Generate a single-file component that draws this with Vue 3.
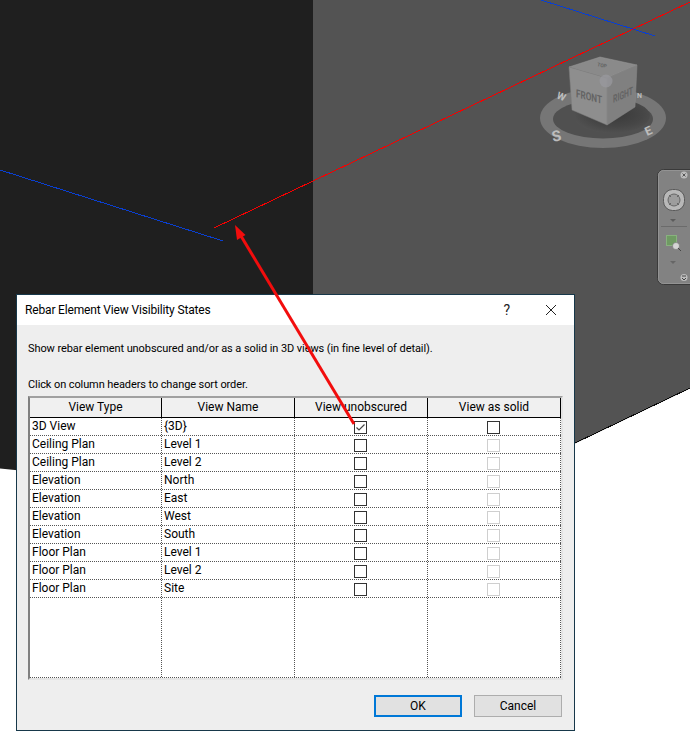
<script setup>
const rows = [
  { type: '3D View', name: '{3D}', checked: true, solid: true },
  { type: 'Ceiling Plan', name: 'Level 1' },
  { type: 'Ceiling Plan', name: 'Level 2' },
  { type: 'Elevation', name: 'North' },
  { type: 'Elevation', name: 'East' },
  { type: 'Elevation', name: 'West' },
  { type: 'Elevation', name: 'South' },
  { type: 'Floor Plan', name: 'Level 1' },
  { type: 'Floor Plan', name: 'Level 2' },
  { type: 'Floor Plan', name: 'Site' }
]
const headers = ['View Type', 'View Name', 'View unobscured', 'View as solid']
</script>

<template>
  <div class="desktop">
    <!-- the 3D model view behind the dialog -->
    <svg class="scene" width="690" height="736" viewBox="0 0 690 736">
      <defs>
        <radialGradient id="shadow" cx="0.55" cy="0.45" r="0.6">
          <stop offset="0" stop-color="#3a3a3a" />
          <stop offset="0.6" stop-color="#464646" />
          <stop offset="1" stop-color="#535353" />
        </radialGradient>
      </defs>
      <polygon points="-5,-5 313,-5 313,500 -5,468" fill="#1f1f1f" />
      <polygon points="313,-5 695,-5 695,386 400,527 313,527" fill="#535353" />
      <line x1="575" y1="443" x2="690" y2="388" stroke="#0c0c0c" stroke-width="1" shape-rendering="crispEdges" />
      <polygon points="0,470 16,478 16,520 0,520" fill="#fff" />
      <line x1="0" y1="170" x2="223" y2="241" stroke="#0a3fd0" stroke-width="1" shape-rendering="crispEdges" />
      <line x1="541" y1="0" x2="655" y2="36" stroke="#0a3fd0" stroke-width="1" shape-rendering="crispEdges" />
      <line x1="214" y1="228" x2="690" y2="2" stroke="#f60000" stroke-width="1" shape-rendering="crispEdges" />

      <!-- view cube -->
      <ellipse cx="603" cy="118" rx="63" ry="30" fill="#767676" />
      <ellipse cx="603" cy="119" rx="50" ry="19.500" fill="#505050" />
      <ellipse cx="612" cy="116" rx="38" ry="17" fill="url(#shadow)" />
      <text x="556" y="98" class="ring" transform="rotate(22 556 98)">W</text>
      <text x="637" y="98" class="ring small">N</text>
      <text x="553" y="142" class="ring big" transform="rotate(-12 553 142)">S</text>
      <text x="647" y="136" class="ring mid" transform="rotate(-24 647 136)">E</text>
      <polygon points="600,57 637,65 607,78 569,67" fill="#8a8a8a" stroke="#9a9a9a" stroke-width="0.5" />
      <polygon points="569,67 607,78 607,125 572,110" fill="#8e8e8e" stroke="#7c7c7c" stroke-width="0.5" />
      <polygon points="607,78 637,65 635,107 607,125" fill="#808080" stroke="#8a8a8a" stroke-width="0.5" />
      <circle cx="606" cy="81" r="6.500" fill="#98989e" opacity="0.75" />
      <text class="face" textLength="26" lengthAdjust="spacingAndGlyphs" transform="matrix(1 0.26 0 1 576 97)">FRONT</text>
      <text class="face" textLength="20" lengthAdjust="spacingAndGlyphs" transform="matrix(1 -0.44 0 1 613 103)">RIGHT</text>
      <text class="face tiny" x="597" y="66" transform="rotate(12 597 66)">TOP</text>

      <!-- navigation bar -->
      <rect x="657.500" y="169.500" width="40" height="115" rx="6" fill="#828282" stroke="#3a3a3a" />
      <rect x="658.500" y="170.500" width="38" height="113" rx="5" fill="none" stroke="#939393" />
      <circle cx="684" cy="175" r="3.500" fill="#bdbdbd" />
      <path d="M682.500 173.500l3 3M685.500 173.500l-3 3" stroke="#555" stroke-width="1" />
      <rect x="663.500" y="189.500" width="21" height="21" rx="9" fill="#b8b8b8" stroke="#5a5a5a" />
      <circle cx="674" cy="200" r="6" fill="#9d9d9d" stroke="#666" />
      <path d="M669 195l2 2M679 195l-2 2M669 205l2-2M679 205l-2-2" stroke="#666" />
      <path d="M670 219h6l-3 3z" fill="#5c5c5c" />
      <line x1="661" y1="226.500" x2="687" y2="226.500" stroke="#6b6b6b" />
      <rect x="666.500" y="235.500" width="10" height="10" fill="#6f9a63" stroke="#88b27e" />
      <circle cx="676" cy="246" r="3.500" fill="#d4d4d4" stroke="#666" stroke-width="0.500" />
      <line x1="678" y1="248" x2="681" y2="251" stroke="#444" />
      <path d="M670 261h6l-3 3z" fill="#666" />
      <circle cx="684" cy="277.500" r="3.500" fill="#bdbdbd" />
      <path d="M682 276h4M682 278l2 2 2-2" stroke="#444" fill="none" />
    </svg>

    <div class="dialog">
      <div class="titlebar">
        <span class="title">Rebar Element View Visibility States</span>
        <span class="help">?</span>
        <svg class="close" width="12" height="12" viewBox="0 0 12 12">
          <path d="M1 1l10 10M11 1L1 11" stroke="#222" stroke-width="1" fill="none" />
        </svg>
      </div>
      <div class="body">
        <p class="desc">Show rebar element unobscured and/or as a solid in 3D views (in fine level of detail).</p>
        <p class="hint">Click on column headers to change sort order.</p>
        <div class="grid">
          <div class="row head">
            <div v-for="h in headers" :key="h" class="cell">{{ h }}</div>
          </div>
          <div v-for="(r, i) in rows" :key="i" class="row">
            <div class="cell text">{{ r.type }}</div>
            <div class="cell text">{{ r.name }}</div>
            <div class="cell box">
              <span class="check">
                <svg v-if="r.checked" width="11" height="11" viewBox="0 0 11 11">
                  <path d="M1.500 5.500l2.500 2.500 5.500-5.500" stroke="#444" stroke-width="1.200" fill="none" />
                </svg>
              </span>
            </div>
            <div class="cell box">
              <span class="check" :class="{ disabled: !r.solid }"></span>
            </div>
          </div>
          <div class="row filler">
            <div class="cell"></div>
            <div class="cell"></div>
            <div class="cell"></div>
            <div class="cell"></div>
          </div>
        </div>
        <div class="buttons">
          <button class="btn primary">OK</button>
          <button class="btn">Cancel</button>
        </div>
      </div>
    </div>

    <!-- annotation arrow drawn over the dialog -->
    <svg class="arrow" width="690" height="736" viewBox="0 0 690 736">
      <line x1="354" y1="424" x2="241" y2="236" stroke="#f20d0d" stroke-width="3" />
      <polygon points="235,225 245.500,235 237,240" fill="#f20d0d" />
    </svg>
  </div>
</template>

<style>
html,
body {
  margin: 0;
  background: #fff;
}
</style>

<style scoped>
.desktop {
  position: relative;
  width: 690px;
  height: 736px;
  overflow: hidden;
  background: #fff;
  font-family: Roboto, "Liberation Sans", Arial, sans-serif;
  font-size: 12px;
  color: #000;
}

.scene,
.arrow {
  position: absolute;
  left: 0;
  top: 0;
}

.arrow {
  pointer-events: none;
}

.ring {
  font-size: 10px;
  font-weight: 700;
  fill: #bdbdbd;
}

.ring.small {
  font-size: 7px;
}

.ring.mid {
  font-size: 12px;
}

.ring.big {
  font-size: 15px;
}

.face {
  font-size: 11px;
  font-weight: 700;
  fill: #646464;
}

.face.tiny {
  font-size: 5px;
}

.dialog {
  position: absolute;
  left: 16px;
  top: 294px;
  width: 559px;
  height: 437px;
  box-sizing: border-box;
  border: 1px solid #17384a;
  background: #eeeeee;
  display: flex;
  flex-direction: column;
}

.titlebar {
  height: 30px;
  background: #fff;
  display: flex;
  align-items: center;
  padding: 0 17px 0 8px;
  flex-shrink: 0;
}

.title {
  flex: 1;
  letter-spacing: -0.16px;
}

.help {
  font-size: 14px;
  margin-right: 35px;
  color: #222;
}

.body {
  flex: 1;
  padding: 0 12px 0 11px;
  display: flex;
  flex-direction: column;
}

.desc {
  margin: 16px 0 0;
  line-height: 16px;
  font-size: 11px;
  letter-spacing: -0.08px;
}

.hint {
  margin: 20px 0 0;
  line-height: 16px;
  font-size: 11px;
  letter-spacing: -0.1px;
}

.grid {
  margin-top: 3px;
  width: 535px;
  box-sizing: border-box;
  border-top: 2px solid #a0a0a0;
  border-left: 2px solid #808080;
  border-right: 2px solid #e4e4e4;
  border-bottom: 2px solid #e4e4e4;
  background: #fff;
}

.row {
  display: grid;
  grid-template-columns: 132px 133px 133px 133px;
  height: 18px;
  box-sizing: border-box;
  border-bottom: 1px dotted #555;
}

.cell {
  box-sizing: border-box;
  border-right: 1px dotted #555;
  line-height: 16px;
}

.text {
  padding-left: 2px;
}

.box {
  display: flex;
  justify-content: center;
  padding-top: 3px;
  padding-right: 2px;
}

.check {
  display: block;
  width: 13px;
  height: 13px;
  box-sizing: border-box;
  border: 1px solid #333;
  background: #fff;
  line-height: 0;
}

.check.disabled {
  border-color: #cfcfcf;
}

.row.head {
  height: 20px;
  border-bottom: 1px solid #000;
  background: #f0f0f0;
}

.row.head .cell {
  border-right: 1px solid #000;
  text-align: center;
  line-height: 19px;
}

.row.filler {
  height: 80px;
}

.buttons {
  display: flex;
  justify-content: flex-end;
  gap: 12px;
  margin-top: 15px;
}

.btn {
  width: 88px;
  height: 22px;
  box-sizing: border-box;
  padding: 0;
  border: 1px solid #adadad;
  background: #e1e1e1;
  font: inherit;
  color: #000;
}

.btn.primary {
  border: 2px solid #0078d7;
}
</style>
